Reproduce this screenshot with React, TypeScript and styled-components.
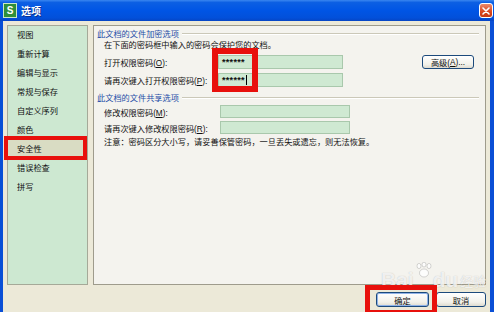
import styled, { createGlobalStyle } from 'styled-components';

const GlobalStyle = createGlobalStyle`
  html, body {
    margin: 0;
    padding: 0;
    background: #ffffff;
  }
  body {
    font-family: "Liberation Sans", "Noto Sans CJK SC", sans-serif;
  }
`;

const Window = styled.div`
  position: relative;
  width: 494px;
  height: 312px;
  display: flex;
  flex-direction: column;
  overflow: hidden;
  background: #0a4fd6;
`;

const TitleBar = styled.div`
  height: 21px;
  flex-shrink: 0;
  display: flex;
  align-items: center;
  padding: 0 1px 0 3px;
  background: linear-gradient(#3a86f0 0%, #0c5fe3 12%, #0055e5 50%, #0250da 85%, #0645c4 100%);
`;

const AppIcon = styled.div`
  width: 12px;
  height: 13px;
  display: flex;
  align-items: center;
  justify-content: center;
  background: #2f8f3a;
  border: 1px solid #c9e8c6;
  color: #ffffff;
  font-size: 10px;
  font-weight: 700;
  line-height: 1;
`;

const Title = styled.div`
  margin-left: 4px;
  color: #ffffff;
  font-size: 10px;
  font-weight: 700;
  text-shadow: 1px 1px 0 #0a2f8a;
`;

const CloseButton = styled.div`
  margin-left: auto;
  width: 12px;
  height: 13px;
  display: flex;
  align-items: center;
  justify-content: center;
  border: 1px solid #ffffff;
  border-radius: 3px;
  background: linear-gradient(#ec8a6c, #d9461f 60%, #c63a12);
`;

const Body = styled.div`
  flex: 1;
  margin: 0 4px 0 3px;
  padding: 4px 4px 0 4px;
  display: flex;
  flex-direction: column;
  background: #ece9d8;
`;

const Main = styled.div`
  height: 260px;
  display: flex;
  gap: 5px;
`;

const Sidebar = styled.div`
  width: 79px;
  border: 1px solid #a5a998;
  background: #cde8d1;
  display: flex;
  flex-direction: column;
`;

const NavItem = styled.div<{ $active?: boolean }>`
  height: 19px;
  line-height: 19px;
  padding-left: 9px;
  font-size: 8.2px;
  color: #111;
  background: ${(p) => (p.$active ? '#d9dcc3' : 'transparent')};
`;

const Panel = styled.div`
  flex: 1;
  border: 1px solid #9e9b8c;
  background: #f4f3ee;
  display: flex;
  flex-direction: column;
  padding: 0 6px 0 3px;
`;

const GroupHeader = styled.div<{ $top: number }>`
  margin-top: ${(p) => p.$top}px;
  height: 12px;
  display: flex;
  align-items: center;
  gap: 3px;
  font-size: 8.2px;
  color: #1f4fa8;

  &::after {
    content: '';
    flex: 1;
    border-top: 1px solid #cbc8b8;
    border-bottom: 1px solid #ffffff;
    margin-top: 1px;
  }
`;

const Text = styled.div<{ $top: number }>`
  margin-top: ${(p) => p.$top}px;
  padding-left: 7px;
  height: 12px;
  line-height: 12px;
  font-size: 8.2px;
  color: #111;
  white-space: nowrap;
`;

const Row = styled.div<{ $top: number; $h: number }>`
  margin-top: ${(p) => p.$top}px;
  height: ${(p) => p.$h}px;
  display: flex;
  align-items: center;
  padding-left: 7px;
`;

const Label = styled.div<{ $w: number }>`
  width: ${(p) => p.$w}px;
  font-size: 8.2px;
  color: #111;
  white-space: nowrap;
`;

const Field = styled.div<{ $w: number }>`
  width: ${(p) => p.$w}px;
  height: 100%;
  box-sizing: border-box;
  border: 1px solid #a9c8ac;
  background: #cfe9d2;
  display: flex;
  align-items: center;
  padding-left: 3px;
  font-size: 9px;
  font-weight: 700;
  color: #111;
  letter-spacing: 0.3px;
`;

const Caret = styled.span`
  display: inline-block;
  width: 1px;
  height: 10px;
  margin-left: 1px;
  background: #000;
`;

const SmallButton = styled.div<{ $w: number; $default?: boolean }>`
  width: ${(p) => p.$w}px;
  height: 15px;
  box-sizing: border-box;
  display: flex;
  align-items: center;
  justify-content: center;
  border: 1px solid #1c4a7c;
  border-radius: 3px;
  background: linear-gradient(#ffffff, #f2f1ea 70%, #dedbcf);
  box-shadow: ${(p) => (p.$default ? 'inset 0 0 0 1px #8fb2e8' : 'none')};
  font-size: 8.2px;
  color: #111;
`;

const AdvancedButton = styled(SmallButton)`
  margin-left: auto;
  margin-right: 5px;
  height: 14px;
`;

const Footer = styled.div`
  display: flex;
  justify-content: flex-end;
  gap: 7px;
  padding-top: 7px;
`;

const Highlight = styled.div<{ $x: number; $y: number; $w: number; $h: number; $b: number }>`
  position: absolute;
  left: ${(p) => p.$x}px;
  top: ${(p) => p.$y}px;
  width: ${(p) => p.$w}px;
  height: ${(p) => p.$h}px;
  box-sizing: border-box;
  border: ${(p) => p.$b}px solid #e8100c;
  pointer-events: none;
`;

const Watermark = styled.div`
  position: absolute;
  left: 381px;
  top: 262px;
  display: flex;
  align-items: flex-end;
  color: rgba(255, 255, 255, 0.8);
  text-shadow: 0 0 1px rgba(110, 110, 110, 0.45);
  pointer-events: none;
  line-height: 1;

  b {
    font-family: "Liberation Sans", sans-serif;
    font-size: 21px;
    font-weight: 700;
  }

  span {
    margin-left: 2px;
    margin-bottom: 2px;
    font-size: 13px;
  }

  svg {
    margin: 0 0 12px 1px;
  }
`;

const navItems = ['视图', '重新计算', '编辑与显示', '常规与保存', '自定义序列', '颜色', '安全性', '错误检查', '拼写'];

export default function App() {
  return (
    <Window>
      <GlobalStyle />
      <TitleBar>
        <AppIcon>S</AppIcon>
        <Title>选项</Title>
        <CloseButton>
          <svg width="8" height="8" viewBox="0 0 8 8">
            <path d="M1 1L7 7M7 1L1 7" stroke="#fff" strokeWidth="1.6" strokeLinecap="round" />
          </svg>
        </CloseButton>
      </TitleBar>
      <Body>
        <Main>
          <Sidebar>
            {navItems.map((item) => (
              <NavItem key={item} $active={item === '安全性'}>
                {item}
              </NavItem>
            ))}
          </Sidebar>
          <Panel>
            <GroupHeader $top={1}>此文档的文件加密选项</GroupHeader>
            <Text $top={1}>在下面的密码框中输入的密码会保护您的文档。</Text>
            <Row $top={3} $h={14}>
              <Label $w={114}>
                打开权限密码(<u>O</u>):
              </Label>
              <Field $w={125}>******</Field>
              <AdvancedButton $w={52}>
                高级(<u>A</u>)...
              </AdvancedButton>
            </Row>
            <Row $top={4} $h={14}>
              <Label $w={114}>
                请再次键入打开权限密码(<u>P</u>):
              </Label>
              <Field $w={125}>
                ******
                <Caret />
              </Field>
            </Row>
            <GroupHeader $top={4}>此文档的文件共享选项</GroupHeader>
            <Row $top={2} $h={13}>
              <Label $w={116}>
                修改权限密码(<u>M</u>):
              </Label>
              <Field $w={130} />
            </Row>
            <Row $top={3} $h={13}>
              <Label $w={116}>
                请再次键入修改权限密码(<u>R</u>):
              </Label>
              <Field $w={130} />
            </Row>
            <Text $top={3}>注意：密码区分大小写，请妥善保管密码，一旦丢失或遗忘，则无法恢复。</Text>
          </Panel>
        </Main>
        <Footer>
          <SmallButton $w={53} $default>
            确定
          </SmallButton>
          <SmallButton $w={50}>取消</SmallButton>
        </Footer>
      </Body>
      <Watermark>
        <b>Bai</b>
        <svg width="18" height="16" viewBox="0 0 18 16">
          <g fill="rgba(255,255,255,0.8)" stroke="rgba(110,110,110,0.45)" strokeWidth="0.6">
            <ellipse cx="4" cy="4" rx="2" ry="2.6" />
            <ellipse cx="9" cy="2.6" rx="2" ry="2.4" />
            <ellipse cx="14" cy="4" rx="2" ry="2.6" />
            <ellipse cx="9" cy="11" rx="4.5" ry="4" />
          </g>
        </svg>
        <b>du</b>
        <span>经验</span>
      </Watermark>
      <Highlight $x={4} $y={136} $w={83} $h={24} $b={4} />
      <Highlight $x={212} $y={48} $w={46} $h={44} $b={6} />
      <Highlight $x={365} $y={285} $w={72} $h={30} $b={5} />
    </Window>
  );
}
